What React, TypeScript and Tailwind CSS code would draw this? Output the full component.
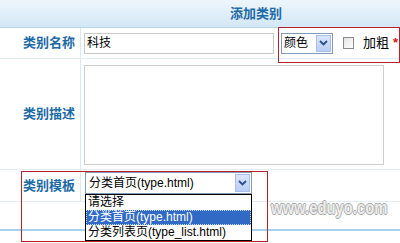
import React from 'react';

const labelCls = 'w-[81px] shrink-0 border-r border-[#dbe8f2] flex items-center justify-end pr-[5px] text-[13px] font-bold text-[#1c6aa6]';
const font = { fontFamily: '"Liberation Sans", "Noto Sans CJK SC", sans-serif' };

const Arrow: React.FC<{ className?: string }> = ({ className }) => (
  <span className={`flex items-center justify-center bg-gradient-to-b from-[#dbe6fb] to-[#b9cdf5] border border-[#a9bfe9] ${className ?? ''}`}>
    <svg width="9" height="6" viewBox="0 0 9 6">
      <path d="M1 1l3.5 3.5L8 1" fill="none" stroke="#2b4d8a" strokeWidth="1.8" />
    </svg>
  </span>
);

const App: React.FC = () => {
  return (
    <div className="relative w-[400px] h-[243px] overflow-hidden bg-white" style={font}>
      <div className="h-[28px] border-b border-[#b9d5ea] bg-gradient-to-b from-[#eef6fc] to-[#d3e7f6] flex items-center pl-[230px] text-[13px] font-bold text-[#1c6aa6]">
        添加类别
      </div>

      <div className="flex h-[31px] border-b border-[#e3edf4]">
        <div className={labelCls}>类别名称</div>
        <div className="flex shrink-0 items-center pl-[3px] whitespace-nowrap">
          <div className="w-[190px] h-[21px] border border-[#c9c9c9] flex items-center pl-[2px] text-[12px] text-black">科技</div>
          <div className="ml-[7px] w-[52px] h-[21px] border border-[#7f9db9] flex items-center justify-between pl-[2px] pr-[1px] text-[12px] text-black">
            颜色
            <Arrow className="w-[15px] h-[17px]" />
          </div>
          <span className="ml-[10px] w-[11px] h-[12px] border border-[#8a8a8a] bg-gradient-to-br from-[#e4e4e4] to-white" />
          <span className="ml-[9px] text-[13px] text-black">加粗</span>
          <span className="ml-[4px] text-[13px] font-bold text-[#d21414]">*</span>
        </div>
      </div>

      <div className="flex h-[111px] border-b border-[#e3edf4]">
        <div className={labelCls}>类别描述</div>
        <div className="pl-[3px] pt-[6px]">
          <div className="w-[300px] h-[100px] border border-[#cfcfcf] bg-white" />
        </div>
      </div>

      <div className="flex h-[32px] border-b border-[#e3edf4]">
        <div className={labelCls}>类别模板</div>
        <div className="relative pl-[4px] pt-[2px]">
          <div className="w-[167px] h-[22px] border border-[#7f9db9] flex items-center justify-between pl-[3px] pr-[1px] text-[12px] text-black">
            分类首页(type.html)
            <Arrow className="w-[15px] h-[18px]" />
          </div>
          <div className="absolute left-[4px] top-[24px] z-10 w-[167px] border border-black bg-white text-[12px] leading-[15px] text-black">
            <div className="pl-[2px] h-[15px]">请选择</div>
            <div className="pl-[2px] h-[15px] bg-[#316ac5] text-white outline outline-1 outline-dotted outline-[#c9d7f2] -outline-offset-1">分类首页(type.html)</div>
            <div className="pl-[2px] h-[15px]">分类列表页(type_list.html)</div>
          </div>
        </div>
      </div>

      <div className="h-[29px] border-b-2 border-[#a6d3ec]" />

      <div className="absolute left-[271px] top-[194px] origin-left scale-x-[0.78] whitespace-nowrap text-[19px] font-bold text-[#ececec] [text-shadow:1px_0_0_#a8a8a8,-1px_0_0_#a8a8a8,0_1px_0_#a8a8a8,0_-1px_0_#a8a8a8]">
        www.eduyo.com
      </div>

      <div className="absolute left-[278px] top-[27px] w-[122px] h-[36px] border border-[#b8232b]" />
      <div className="absolute left-[21px] top-[171px] w-[247px] h-[71px] border border-[#b8232b]" />
    </div>
  );
};

export default App;
